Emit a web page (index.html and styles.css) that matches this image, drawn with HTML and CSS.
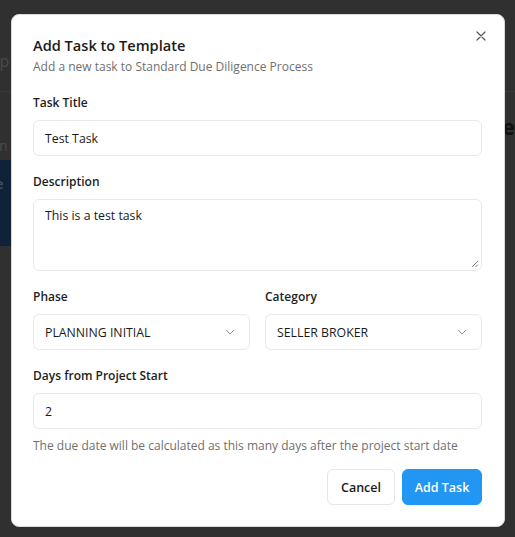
FILE: index.html
```html
<!DOCTYPE html>
<html lang="en">
<head>
<meta charset="utf-8">
<title>Add Task to Template</title>
<link rel="stylesheet" href="styles.css">
</head>
<body>
<div class="page">
  <header class="page-header">
    <span class="page-header-text">Template Setup</span>
  </header>
  <div class="page-body">
    <aside class="sidebar">
      <div class="side-item">Tasks Run</div>
      <div class="side-item active">Manage</div>
    </aside>
    <main class="content">
      <h2 class="content-title">Finance</h2>
      <p class="content-line">Info</p>
      <p class="content-line">Task</p>
    </main>
  </div>
</div>

<div class="overlay">
  <div class="modal" role="dialog" aria-labelledby="modal-title">
    <button class="close" aria-label="Close">
      <svg width="10" height="10" viewBox="0 0 10 10"><path d="M1 1L9 9M9 1L1 9" stroke="#555" stroke-width="1.2" stroke-linecap="round"/></svg>
    </button>
    <div class="modal-head">
      <h1 id="modal-title" class="modal-title">Add Task to Template</h1>
      <p class="modal-sub">Add a new task to Standard Due Diligence Process</p>
    </div>
    <form class="form">
      <div class="field">
        <label class="label">Task Title</label>
        <div class="input">Test Task</div>
      </div>
      <div class="field">
        <label class="label">Description</label>
        <div class="input textarea">This is a test task
          <svg class="grip" width="8" height="8" viewBox="0 0 8 8"><path d="M7 1L1 7M7 4.5L4.5 7" stroke="#777" stroke-width="0.9"/></svg>
        </div>
      </div>
      <div class="row">
        <div class="field">
          <label class="label">Phase</label>
          <div class="input select"><span>PLANNING INITIAL</span>
            <svg width="10" height="6" viewBox="0 0 10 6"><path d="M1 1L5 5L9 1" fill="none" stroke="#999" stroke-width="1"/></svg>
          </div>
        </div>
        <div class="field">
          <label class="label">Category</label>
          <div class="input select"><span>SELLER BROKER</span>
            <svg width="10" height="6" viewBox="0 0 10 6"><path d="M1 1L5 5L9 1" fill="none" stroke="#999" stroke-width="1"/></svg>
          </div>
        </div>
      </div>
      <div class="field last">
        <label class="label">Days from Project Start</label>
        <div class="input">2</div>
        <p class="help">The due date will be calculated as this many days after the project start date</p>
      </div>
      <div class="actions">
        <button type="button" class="btn btn-cancel">Cancel</button>
        <button type="button" class="btn btn-primary">Add Task</button>
      </div>
    </form>
  </div>
</div>
</body>
</html>
```

FILE: styles.css
```css
* { box-sizing: border-box; }
html, body { margin: 0; padding: 0; }
body {
  width: 515px;
  height: 537px;
  overflow: hidden;
  background: #303030;
  font-family: "Open Sans", "Noto Sans", sans-serif;
  color: #1f1f1f;
}

/* underlying page (dimmed) */
.page { height: 537px; }
.page-header {
  height: 92px;
  border-bottom: 1px solid #3a3a3a;
  display: flex;
  align-items: center;
  padding-top: 30px;
}
.page-header-text {
  font-size: 16px;
  color: #4b4b4b;
  margin-left: -108px;
}
.page-body { display: flex; }
.sidebar { width: 200px; padding-top: 44px; }
.side-item {
  font-size: 14px;
  line-height: 20px;
  color: #4b4b4b;
  height: 24px;
  margin-left: -58px;
}
.side-item.active {
  margin-left: 0;
  height: 86px;
  background: #0f2237;
  color: #3b4c60;
  font-weight: 700;
  padding-top: 14px;
  text-indent: -52px;
}
.content { flex: 1; padding-top: 19px; padding-left: 292px; }
.content-title {
  margin: 0 0 85px -9px;
  font-size: 22px;
  line-height: 30px;
  color: #111;
  font-weight: 700;
  white-space: nowrap;
}
.content-line { margin: 0; font-size: 14px; line-height: 18px; color: #5a5a5a; white-space: nowrap; }

/* overlay + modal */
.overlay {
  position: fixed;
  inset: 0;
  display: flex;
  justify-content: flex-start;
  padding: 14px 0 0 11px;
}
.modal {
  position: relative;
  width: 494px;
  height: 513px;
  background: #fff;
  border-radius: 8px;
  border: 1px solid #d9d9d9;
  padding: 20px 22px 0 21px;
}
.close {
  position: absolute;
  top: 15px;
  right: 17px;
  width: 12px;
  height: 12px;
  padding: 0;
  border: 0;
  background: none;
  display: flex;
  align-items: center;
  justify-content: center;
}
.modal-head { margin-bottom: 16px; }
.modal-title {
  margin: 0;
  font-size: 14.6px;
  line-height: 20px;
  font-weight: 600;
  color: #1b1b1b;
}
.modal-sub {
  margin: 2px 0 0;
  font-size: 12px;
  line-height: 20px;
  color: #6f6f6f;
}
.form { display: flex; flex-direction: column; }
.field { display: flex; flex-direction: column; margin-bottom: 16px; flex: 1; }
.field.last { margin-bottom: 14px; }
.label {
  font-size: 12px;
  line-height: 20px;
  font-weight: 600;
  color: #1e1e1e;
  margin-bottom: 7px;
}
.input {
  height: 36px;
  border: 1px solid #e9e9e9;
  border-radius: 6px;
  padding: 0 11px;
  display: flex;
  align-items: center;
  font-size: 12.3px;
  color: #1a1a1a;
}
.textarea {
  height: 72px;
  align-items: flex-start;
  padding-top: 7px;
  position: relative;
}
.grip { position: absolute; right: 2px; bottom: 2px; }
.row { display: flex; gap: 15px; }
.select { justify-content: space-between; padding-right: 14px; }
.help {
  margin: 8px 0 0;
  font-size: 12px;
  line-height: 18px;
  color: #707070;
}
.actions {
  display: flex;
  justify-content: flex-end;
  gap: 7px;
}
.btn {
  height: 36px;
  border-radius: 6px;
  font-family: inherit;
  font-size: 12.5px;
  font-weight: 600;
  padding: 0;
  white-space: nowrap;
  cursor: pointer;
}
.btn-cancel {
  background: #fff;
  border: 1px solid #e6e6e6;
  color: #1a1a1a;
  width: 68px;
}
.btn-primary {
  background: #2196f3;
  border: 1px solid #2196f3;
  color: #fff;
  width: 80px;
}
```
